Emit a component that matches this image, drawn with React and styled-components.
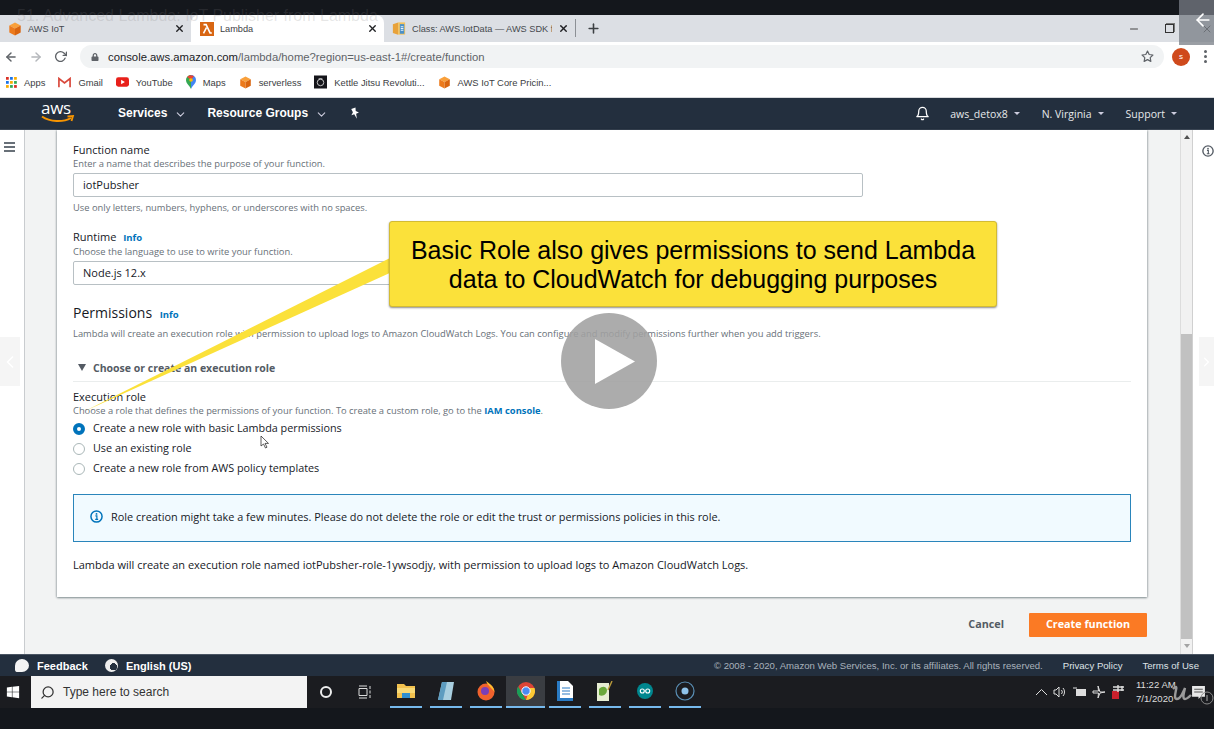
import React from 'react'
import styled, { createGlobalStyle } from 'styled-components'
import { FaWindows, FaLock } from 'react-icons/fa'
import { FiBell, FiChevronDown, FiSearch, FiStar, FiArrowLeft, FiArrowRight, FiRotateCw, FiChevronLeft, FiChevronRight, FiMinus, FiX, FiPlus } from 'react-icons/fi'

const Global = createGlobalStyle`
    html, body { margin: 0; padding: 0; background: #14171c; }
    * { box-sizing: border-box; }
`

const ember = `"Open Sans", "Noto Sans", Arial, sans-serif`
const arial = `"Liberation Sans", Arial, sans-serif`

const Cube = ({ size = 14 }) => (
    <svg width={size} height={size} viewBox="0 0 16 16">
        <path d="M8 0.5 14.5 4 8 7.5 1.5 4z" fill="#f9a03a" />
        <path d="M1.5 4 8 7.5V15.5L1.5 12z" fill="#ec7a1c" />
        <path d="M14.5 4 8 7.5V15.5L14.5 12z" fill="#d9650f" />
    </svg>
)

const LambdaIcon = () => (
    <svg width="14" height="14" viewBox="0 0 16 16">
        <rect width="16" height="16" fill="#d86613" />
        <path d="M4 3h3l4.5 9.5H13.5M7.4 6.5 4 13" fill="none" stroke="#fff" strokeWidth="1.8" />
    </svg>
)

const BookIcon = () => (
    <svg width="14" height="15" viewBox="0 0 16 16">
        <path d="M1 3 7 1v14l-6-2z" fill="#e8a23a" />
        <path d="M7 1h8v14H7z" fill="#f4c25c" />
        <path d="M9 3h5v11H9z" fill="#4a90c8" />
        <path d="M10 6h3M10 8h3M10 10h3" stroke="#fff" />
    </svg>
)

const AppsGrid = () => (
    <svg width="11" height="11" viewBox="0 0 12 12">
        {[0, 1, 2].flatMap(r => [0, 1, 2].map(c => (
            <rect key={`${r}${c}`} x={c * 4.4} y={r * 4.4} width="3" height="3" fill={['#d93025', '#1a73e8', '#f9ab00', '#34a853'][(r + c) % 4]} />
        )))}
    </svg>
)

const GmailIcon = () => (
    <svg width="13" height="11" viewBox="0 0 14 11">
        <path d="M1 10.5V1.2L7 6l6-4.8v9.3" fill="none" stroke="#d9483b" strokeWidth="1.8" />
    </svg>
)

const YoutubeIcon = () => (
    <svg width="13" height="10" viewBox="0 0 14 10">
        <rect width="14" height="10" rx="2.5" fill="#e8201a" />
        <path d="M5.5 2.6 9.6 5 5.5 7.4z" fill="#fff" />
    </svg>
)

const MapsIcon = () => (
    <svg width="10" height="14" viewBox="0 0 10 14">
        <path d="M5 14C3.5 10.5 0 8.500 0 5a5 5 0 0 1 5-5z" fill="#34a853" />
        <path d="M5 14c1.500-3.500 5-5.500 5-9a5 5 0 0 0-5-5z" fill="#4285f4" />
        <path d="M1.200 2 5 5 8 1.200A5 5 0 0 0 1.200 2z" fill="#ea4335" />
        <circle cx="5" cy="5" r="1.800" fill="#fbbc04" />
    </svg>
)

const KettleIcon = () => (
    <svg width="13" height="14" viewBox="0 0 14 14">
        <rect width="14" height="14" fill="#15151a" />
        <circle cx="7" cy="7.500" r="3.500" fill="none" stroke="#cfcfcf" />
        <path d="M5 3.500h4" stroke="#cfcfcf" />
    </svg>
)

const AwsLogo = () => (
    <LogoWrap>
        <LogoText>aws</LogoText>
        <svg width="34" height="9" viewBox="0 0 34 9">
            <path d="M1 1.500C9 7 22 7.500 30 3" fill="none" stroke="#f79400" strokeWidth="2" />
            <path d="M26.500 1.500 32 1 30.500 6" fill="none" stroke="#f79400" strokeWidth="1.800" />
        </svg>
    </LogoWrap>
)

const FolderIcon = () => (
    <svg width="18" height="18" viewBox="0 0 18 18">
        <path d="M0 2h7l2 2h9v12H0z" fill="#f2c14e" />
        <path d="M0 6h18v5H0z" fill="#f8d976" />
        <path d="M5 11h8v5H5z" fill="#2f8fd0" />
    </svg>
)

const NotepadIcon = () => (
    <svg width="18" height="20" viewBox="0 0 18 20">
        <path d="M5 1h12l-3 18H1z" fill="#a9cfe0" />
        <path d="M5 1h5L6 19H1z" fill="#5d9cc0" />
    </svg>
)

const FirefoxIcon = () => (
    <svg width="18" height="20" viewBox="0 0 18 20">
        <circle cx="9" cy="11" r="8.500" fill="#f0622d" />
        <path d="M9 0c4 3 8 5 8.500 11C14 6 11 5 9 0z" fill="#ffbd2e" />
        <circle cx="8" cy="10" r="4" fill="#7a3fb8" />
    </svg>
)

const ChromeIcon = () => (
    <svg width="18" height="18" viewBox="0 0 18 18">
        <circle cx="9" cy="9" r="9" fill="#dc4437" />
        <path d="M1.200 4.500 9 18a9 9 0 0 1-7.800-13.500z" fill="#199f58" />
        <path d="M9 18 13 6h4.500A9 9 0 0 1 9 18z" fill="#fcc934" />
        <circle cx="9" cy="9" r="4.200" fill="#4a8bf2" stroke="#fff" />
    </svg>
)

const DocIcon = () => (
    <svg width="16" height="20" viewBox="0 0 16 20">
        <path d="M0 0h11l5 5v15H0z" fill="#fff" />
        <path d="M0 0h3v20H0zM0 17h16v3H0z" fill="#2a7bc4" />
        <path d="M5 7h8M5 10h8M5 13h8" stroke="#2a7bc4" strokeWidth="1.200" />
    </svg>
)

const NotepadPlus = () => (
    <svg width="16" height="20" viewBox="0 0 16 20">
        <path d="M0 2h12v18H0z" fill="#e6edd2" />
        <path d="M2 8c3-3 7-3 8 1 0 4-4 7-8 5z" fill="#6aa83a" />
        <path d="M11 9 15 0" stroke="#b99a3a" strokeWidth="1.400" />
    </svg>
)

const ArduinoIcon = () => (
    <svg width="16" height="16" viewBox="0 0 16 16">
        <circle cx="8" cy="8" r="8" fill="#00878f" />
        <circle cx="5.300" cy="8" r="2" fill="none" stroke="#fff" strokeWidth="1.100" />
        <circle cx="10.700" cy="8" r="2" fill="none" stroke="#fff" strokeWidth="1.100" />
    </svg>
)

const CircleApp = () => (
    <svg width="20" height="20" viewBox="0 0 20 20">
        <circle cx="10" cy="10" r="9" fill="none" stroke="#5a8fb5" strokeWidth="1.200" />
        <circle cx="10" cy="10" r="3.500" fill="#8fc3ea" />
    </svg>
)

const InfoCircle = ({ color, size = 13 }) => (
    <svg width={size} height={size} viewBox="0 0 14 14">
        <circle cx="7" cy="7" r="6" fill="none" stroke={color} strokeWidth="1.600" />
        <circle cx="7" cy="4.200" r="1" fill={color} />
        <path d="M5.800 6.300H7.400V10M5.600 10.200H8.800" fill="none" stroke={color} strokeWidth="1.300" />
    </svg>
)

const tabs = [
    { id: 'iot', icon: <Cube />, label: 'AWS IoT' },
    { id: 'lambda', icon: <LambdaIcon />, label: 'Lambda', active: true },
    { id: 'sdk', icon: <BookIcon />, label: 'Class: AWS.IotData — AWS SDK f' },
]

const bookmarks = [
    { icon: <AppsGrid />, label: 'Apps' },
    { icon: <GmailIcon />, label: 'Gmail' },
    { icon: <YoutubeIcon />, label: 'YouTube' },
    { icon: <MapsIcon />, label: 'Maps' },
    { icon: <Cube size={13} />, label: 'serverless' },
    { icon: <KettleIcon />, label: 'Kettle Jitsu Revoluti...' },
    { icon: <Cube size={13} />, label: 'AWS IoT Core Pricin...' },
]

const taskApps = [
    { icon: <FolderIcon /> },
    { icon: <NotepadIcon /> },
    { icon: <FirefoxIcon /> },
    { icon: <ChromeIcon />, active: true },
    { icon: <DocIcon /> },
    { icon: <NotepadPlus /> },
    { icon: <ArduinoIcon /> },
    { icon: <CircleApp /> },
]

const roles = [
    { label: 'Create a new role with basic Lambda permissions', checked: true },
    { label: 'Use an existing role' },
    { label: 'Create a new role from AWS policy templates' },
]

const App = () => {
    return (
        <Page>
            <Global />
            <DarkStrip h={15} />

            <TabStrip>
                {tabs.map(tab => (
                    <Tab key={tab.id} $active={tab.active}>
                        {tab.icon}
                        <TabLabel>{tab.label}</TabLabel>
                        <FiX size={11} color="#202124" strokeWidth={3} />
                    </Tab>
                ))}
                <TabDivider />
                <NewTab><FiPlus size={15} strokeWidth={2.5} /></NewTab>
                <WindowButtons>
                    <FiMinus size={12} color="#444" />
                    <RestoreIcon />
                    <FiX size={12} color="#444" />
                </WindowButtons>
            </TabStrip>

            <Toolbar>
                <FiArrowLeft size={14} color="#5f6368" strokeWidth={2.500} />
                <FiArrowRight size={14} color="#b4b7bb" strokeWidth={2.500} />
                <FiRotateCw size={13} color="#5f6368" strokeWidth={2.500} />
                <AddressPill>
                    <FaLock size={8} color="#5f6368" />
                    <Url><b>console.aws.amazon.com</b>/lambda/home?region=us-east-1#/create/function</Url>
                    <FiStar size={13} color="#5f6368" strokeWidth={2.200} />
                </AddressPill>
                <Avatar>s</Avatar>
                <Kebab><i /><i /><i /></Kebab>
            </Toolbar>

            <Bookmarks>
                {bookmarks.map(b => (
                    <Bookmark key={b.label}>{b.icon}<span>{b.label}</span></Bookmark>
                ))}
            </Bookmarks>

            <AwsNav>
                <AwsLogo />
                <NavMain>Services <FiChevronDown size={13} /></NavMain>
                <NavMain>Resource Groups <FiChevronDown size={13} /></NavMain>
                <Pin viewBox="0 0 12 12"><path d="M4 0.500h4.500L7.500 4 10 6.500H7l-1 5-1-5H2L4.500 4z" fill="#fff" transform="rotate(-20 6 6)" /></Pin>
                <NavRight>
                    <BellWrap><FiBell size={15} color="#fff" /></BellWrap>
                    <NavItem>aws_detox8<Caret /></NavItem>
                    <NavItem>N. Virginia<Caret /></NavItem>
                    <NavItem>Support<Caret /></NavItem>
                </NavRight>
            </AwsNav>

            <Body>
                <SideRail>
                    <Burger><i /><i /><i /></Burger>
                </SideRail>
                <Content>
                    <Card>
                        <Label>Function name</Label>
                        <Hint>Enter a name that describes the purpose of your function.</Hint>
                        <TextField>iotPubsher</TextField>
                        <Note>Use only letters, numbers, hyphens, or underscores with no spaces.</Note>

                        <Label $top={15}>Runtime <InfoLink>Info</InfoLink></Label>
                        <Hint>Choose the language to use to write your function.</Hint>
                        <TextField>Node.js 12.x</TextField>

                        <Heading>Permissions <InfoLink>Info</InfoLink></Heading>
                        <Hint>Lambda will create an execution role with permission to upload logs to Amazon CloudWatch Logs. You can configure and modify permissions further when you add triggers.</Hint>

                        <Section><Triangle />Choose or create an execution role</Section>

                        <Label $top={7}>Execution role</Label>
                        <Hint>Choose a role that defines the permissions of your function. To create a custom role, go to the <InfoLink>IAM console</InfoLink>.</Hint>
                        <Roles>
                            {roles.map(r => (
                                <Role key={r.label}><Radio $checked={r.checked} />{r.label}</Role>
                            ))}
                        </Roles>

                        <Alert>
                            <InfoCircle color="#0073bb" />
                            Role creation might take a few minutes. Please do not delete the role or edit the trust or permissions policies in this role.
                        </Alert>
                        <Summary>Lambda will create an execution role named iotPubsher-role-1ywsodjy, with permission to upload logs to Amazon CloudWatch Logs.</Summary>
                    </Card>
                    <Actions>
                        <CancelBtn>Cancel</CancelBtn>
                        <CreateBtn>Create function</CreateBtn>
                    </Actions>
                </Content>
                <Scrollbar>
                    <ArrowUp />
                    <ScrollTrack><ScrollThumb /></ScrollTrack>
                    <ArrowDown />
                </Scrollbar>
                <RightRail><InfoCircle color="#545b64" size={12} /></RightRail>
            </Body>

            <Footer>
                <FootLeft><Bubble />Feedback</FootLeft>
                <FootLeft $lang><Globe />English (US)</FootLeft>
                <FootRight>
                    <Copy>© 2008 - 2020, Amazon Web Services, Inc. or its affiliates. All rights reserved.</Copy>
                    <FootLink>Privacy Policy</FootLink>
                    <FootLink>Terms of Use</FootLink>
                </FootRight>
            </Footer>

            <Taskbar>
                <StartBtn><FaWindows size={14} color="#fff" /></StartBtn>
                <SearchBox>
                    <FiSearch size={15} color="#333" style={{ transform: 'scaleX(-1)' }} />
                    Type here to search
                </SearchBox>
                <Cortana />
                <TaskView viewBox="0 0 14 14">
                    <path d="M1 3.500h8v7H1zM1 1h8M1 13h8M12 1v3M12 5.500v3M12 10v3" fill="none" stroke="#ddd" />
                </TaskView>
                <TaskApps>
                    {taskApps.map((a, i) => (
                        <TaskApp key={i} $active={a.active}>{a.icon}</TaskApp>
                    ))}
                </TaskApps>
                <Tray>
                    <svg width="13" height="8" viewBox="0 0 13 8"><path d="M1 7 6.500 1.500 12 7" fill="none" stroke="#ddd" /></svg>
                    <svg width="14" height="14" viewBox="0 0 14 14"><path d="M1 5h2l3-3v10L3 9H1zM8.500 5a3 3 0 0 1 0 4M10 3a6 6 0 0 1 0 8" fill="none" stroke="#ddd" /></svg>
                    <svg width="14" height="10" viewBox="0 0 14 10"><path d="M3 2h10v7H3z" fill="#ddd" /><path d="M0 1h4" stroke="#ddd" /></svg>
                    <svg width="14" height="14" viewBox="0 0 14 14"><path d="M6 1 8 7h5L8 8l-2 5 .5-5H1V6h5.500z" fill="none" stroke="#ddd" /></svg>
                    <svg width="13" height="14" viewBox="0 0 13 14"><rect x="0" y="6" width="7" height="8" fill="#c8202c" /><path d="M1 2h11M1 5h11M6 0v7M10 1v5" stroke="#ddd" strokeWidth="1.400" /></svg>
                    <Clock><span>11:22 AM</span><span>7/1/2020</span></Clock>
                    <Notif viewBox="0 0 14 14"><path d="M1 1h12v10H9l-2 2V11H1z" fill="#e8e8e8" /><path d="M3 4h8M3 6.500h8" stroke="#555" /></Notif>
                </Tray>
            </Taskbar>

            <DarkStrip h={21} />

            {/* video player stuff on top of the page */}
            <VideoTitle>51. Advanced Lambda: IoT Publisher from Lambda</VideoTitle>
            <BackBox><FiArrowLeft size={20} color="#fff" strokeWidth={2} /></BackBox>
            <Pointer viewBox="0 0 1214 729">
                <polygon points="392,257 392,272 85,411" fill="#fbe13a" />
            </Pointer>
            <Callout>Basic Role also gives permissions to send Lambda<br />data to CloudWatch for debugging purposes</Callout>
            <PlayButton>
                <svg width="40" height="45" viewBox="0 0 40 45"><path d="M0 0 40 22.500 0 45z" fill="#fff" /></svg>
            </PlayButton>
            <SlideNav $side="left"><FiChevronLeft size={24} color="#fff" /></SlideNav>
            <SlideNav $side="right"><FiChevronRight size={24} color="#fff" /></SlideNav>
            <Cursor viewBox="0 0 10 14"><path d="M1 1v10l2.500-2 2 4 1.500-.8-2-3.800H8.500z" fill="#fff" stroke="#333" strokeWidth=".8" /></Cursor>
            <Watermark viewBox="0 0 44 26">
                <path d="M3 9c3-3 4-3 3 1-1 5-2 9 1 9 4 0 6-7 8-11-1 4-3 11 0 11 2 0 4-2 6-4" fill="none" stroke="#9a9a9a" strokeWidth="2.400" />
                <circle cx="37" cy="18" r="6" fill="none" stroke="#8a8a8a" strokeWidth="1" />
                <path d="M37 15v6" stroke="#aaa" strokeWidth="1" />
            </Watermark>
        </Page>
    )
}

export default App


const Page = styled.div`
    position: relative;
    width: 1214px;
    height: 729px;
    overflow: hidden;
    display: flex;
    flex-direction: column;
    font-family: ${ember};
    background: #14171c;
`

const DarkStrip = styled.div`
    height: ${props => props.h}px;
    flex: none;
    background: #14171c;
`

const TabStrip = styled.div`
    height: 27px;
    flex: none;
    display: flex;
    align-items: flex-end;
    background: #dcdfe4;
    font-family: ${arial};
`

const Tab = styled.div`
    width: ${props => props.$active ? '193px' : '191px'};
    height: 27px;
    padding: 0 6px 0 ${props => props.$active ? '9px' : '8px'};
    display: flex;
    align-items: center;
    gap: 6px;
    border-radius: 8px 8px 0 0;
    background: ${props => props.$active ? '#ffffff' : 'transparent'};
    color: ${props => props.$active ? '#3c4043' : '#45494e'};
`

const TabLabel = styled.span`
    flex: 1;
    font-size: 9.200px;
    white-space: nowrap;
    overflow: hidden;
`

const TabDivider = styled.div`
    width: 1px;
    height: 18px;
    margin: 0 0 5px 0;
    background: #8c9095;
`

const NewTab = styled.div`
    width: 34px;
    height: 27px;
    display: flex;
    align-items: center;
    justify-content: center;
    color: #3c4043;
`

const WindowButtons = styled.div`
    margin-left: auto;
    width: 86px;
    height: 27px;
    padding: 0 1px 0 0;
    display: flex;
    align-items: center;
    justify-content: space-between;
`

const RestoreIcon = styled.div`
    width: 9px;
    height: 9px;
    margin-right: 3px;
    border: 1.5px solid #333;
    box-shadow: 1px -1px 0 #777;
`

const Toolbar = styled.div`
    height: 26px;
    flex: none;
    padding: 3px 0 0 4px;
    display: flex;
    align-items: center;
    gap: 11px;
    background: #fff;
`

const AddressPill = styled.div`
    flex: 1;
    height: 23px;
    margin-left: 2px;
    padding: 0 10px 0 11px;
    display: flex;
    align-items: center;
    gap: 9px;
    border-radius: 12px;
    background: #f1f3f4;
`

const Url = styled.span`
    flex: 1;
    font-family: ${arial};
    font-size: 11.300px;
    color: #5f6368;
    white-space: nowrap;

    b {
        font-weight: 400;
        color: #202124;
    }
`

const Avatar = styled.div`
    width: 18px;
    height: 18px;
    margin-left: -3px;
    border-radius: 50%;
    display: flex;
    align-items: center;
    justify-content: center;
    background: #cf4a1c;
    color: #fff;
    font: 8px ${arial};
`

const Kebab = styled.div`
    width: 3px;
    margin: 0 7px 0 3px;
    display: flex;
    flex-direction: column;
    gap: 2px;

    i {
        display: block;
        height: 3px;
        border-radius: 50%;
        background: #5f6368;
    }
`

const Bookmarks = styled.div`
    height: 30px;
    flex: none;
    padding: 0 0 1px 6px;
    display: flex;
    align-items: center;
    gap: 13px;
    background: #fff;
    border-bottom: 1px solid #d8dadd;
    font-family: ${arial};
`

const Bookmark = styled.div`
    display: flex;
    align-items: center;
    gap: 7px;
    font-size: 9.400px;
    color: #3c4043;
`

const AwsNav = styled.div`
    height: 32px;
    flex: none;
    padding-left: 41px;
    display: flex;
    align-items: center;
    background: #232f3e;
    color: #fff;
    border-bottom: 1px solid #3a4553;
`

const LogoWrap = styled.div`
    width: 77px;
    display: flex;
    flex-direction: column;
    height: 26px;
    margin-top: -2px;
`

const LogoText = styled.div`
    font: 17px/15px ${ember};
    color: #fff;
    letter-spacing: -.3px;
`

const NavMain = styled.div`
    margin-right: 20px;
    padding-bottom: 1px;
    display: flex;
    align-items: center;
    gap: 7px;
    font: 700 12px ${arial};
    white-space: nowrap;

    svg { margin-top: 2px; color: #ccd; }
`

const Pin = styled.svg`
    width: 12px;
    height: 13px;
    margin-left: 1px;
`

const NavRight = styled.div`
    margin-left: auto;
    padding: 0 37px 0 0;
    display: flex;
    align-items: center;
    gap: 22px;
`

const BellWrap = styled.div`
    display: flex;
    margin-right: -2px;
`

const NavItem = styled.div`
    display: flex;
    align-items: center;
    gap: 6px;
    font: 10.500px ${ember};
    color: #e6e8ea;
`

const Caret = styled.i`
    width: 0;
    height: 0;
    border-left: 3.500px solid transparent;
    border-right: 3.500px solid transparent;
    border-top: 3.500px solid #ccd;
`

const Body = styled.div`
    flex: 1;
    min-height: 0;
    display: flex;
    background: #f2f3f3;
`

const SideRail = styled.div`
    width: 25px;
    flex: none;
    padding: 12px 0 0 4px;
    background: #fff;
    border-right: 1px solid #c9cccf;
`

const Burger = styled.div`
    width: 11px;
    display: flex;
    flex-direction: column;
    gap: 2px;

    i {
        display: block;
        height: 2px;
        background: #687078;
    }
`

const Content = styled.div`
    flex: 1;
    padding: 0 33px 0 32px;
    display: flex;
    flex-direction: column;
`

const Card = styled.div`
    height: 467px;
    padding: 12px 16px 0;
    background: #fff;
    box-shadow: 0 1px 2px rgba(0, 28, 36, .4), 1px 0 2px rgba(0, 28, 36, .15), -1px 0 2px rgba(0, 28, 36, .15);
`

const Label = styled.div`
    margin-top: ${props => props.$top || 0}px;
    font-size: 11px;
    line-height: 15px;
    color: #16191f;
`

const Hint = styled.div`
    margin-top: 1px;
    font-size: 9.350px;
    line-height: 12px;
    color: #687078;
    white-space: nowrap;
`

const InfoLink = styled.span`
    font-size: 9.500px;
    font-weight: 700;
    color: #0073bb;
    margin-left: 4px;

    ${Hint} & {
        margin-left: 0;
        font-size: 9.350px;
    }
`

const TextField = styled.div`
    width: 790px;
    height: 24px;
    margin-top: 3px;
    padding: 0 9px 2px;
    display: flex;
    align-items: center;
    border: 1px solid #b8c0c4;
    border-radius: 2px;
    font-size: 11px;
    color: #16191f;
`

const Note = styled(Hint)`
    margin-top: 5px;
`

const Heading = styled.div`
    margin: 18px 0 4px;
    font-size: 14px;
    line-height: 19px;
    color: #16191f;
`

const Section = styled.div`
    height: 29px;
    margin-top: 13px;
    padding: 1px 0 0 5px;
    display: flex;
    align-items: center;
    gap: 7px;
    border-bottom: 1px solid #eaeded;
    font-size: 10.500px;
    font-weight: 700;
    color: #545b64;
`

const Triangle = styled.i`
    width: 0;
    height: 0;
    border-left: 4.500px solid transparent;
    border-right: 4.500px solid transparent;
    border-top: 7px solid #545b64;
`

const Roles = styled.div`
    margin-top: 2px;
    display: flex;
    flex-direction: column;
    gap: 4px;
`

const Role = styled.div`
    height: 16px;
    display: flex;
    align-items: center;
    gap: 8px;
    font-size: 10.800px;
    color: #16191f;
`

const Radio = styled.i`
    width: 12px;
    height: 12px;
    margin-top: 4px;
    border-radius: 50%;
    background: #fff;
    border: ${props => props.$checked ? '4px solid #0073bb' : '1px solid #aab7b8'};
`

const Alert = styled.div`
    height: 48px;
    margin-top: 19px;
    padding: 0 0 4px 16px;
    display: flex;
    align-items: center;
    gap: 8px;
    background: #f1faff;
    border: 1px solid #2a85bb;
    font-size: 10.900px;
    color: #16191f;
`

const Summary = styled.div`
    margin-top: 15px;
    font-size: 11px;
    line-height: 16px;
    color: #16191f;
`

const Actions = styled.div`
    margin-top: 16px;
    display: flex;
    align-items: center;
    justify-content: flex-end;
    gap: 25px;
`

const CancelBtn = styled.div`
    margin-bottom: 3px;
    font-size: 10.800px;
    font-weight: 700;
    color: #545b64;
`

const CreateBtn = styled.div`
    width: 118px;
    height: 24px;
    padding-bottom: 3px;
    display: flex;
    align-items: center;
    justify-content: center;
    border-radius: 1px;
    font-size: 10.800px;
    font-weight: 700;
    color: #fff;
    background: #fb7a24;
`

const Scrollbar = styled.div`
    width: 13px;
    flex: none;
    display: flex;
    flex-direction: column;
    align-items: center;
    background: #f1f1f1;
    border-left: 1px solid #dcdcdc;
    border-right: 1px solid #d0d0d0;
`

const ArrowUp = styled.i`
    margin: 5px 0;
    width: 0;
    height: 0;
    border-left: 3.500px solid transparent;
    border-right: 3.500px solid transparent;
    border-bottom: 4px solid #505050;
`

const ArrowDown = styled(ArrowUp)`
    border-bottom: 0;
    border-top: 4px solid #a3a3a3;
    margin-bottom: 6px;
`

const ScrollTrack = styled.div`
    flex: 1;
    width: 100%;
    display: flex;
    align-items: flex-end;
`

const ScrollThumb = styled.div`
    width: 100%;
    height: 305px;
    background: #c1c1c1;
`

const RightRail = styled.div`
    width: 21px;
    flex: none;
    padding: 10px 0 0 9px;
    background: #fff;
`

const Footer = styled.div`
    height: 22px;
    flex: none;
    padding-left: 15px;
    display: flex;
    align-items: center;
    background: #232f3e;
    border-top: 1px solid #4a5563;
`

const FootLeft = styled.div`
    width: ${props => props.$lang ? 'auto' : '90px'};
    display: flex;
    align-items: center;
    gap: 8px;
    font: 700 11px ${arial};
    color: #fff;
`

const Bubble = styled.i`
    width: 14px;
    height: 13px;
    border-radius: 50% 50% 50% 20%;
    background: #f4f4f4;
`

const Globe = styled.i`
    width: 13px;
    height: 13px;
    border-radius: 50%;
    background: radial-gradient(circle at 65% 60%, #232f3e 30%, #eee 32%);
`

const FootRight = styled.div`
    margin-left: auto;
    padding-right: 15px;
    display: flex;
    align-items: center;
    gap: 20px;
    font: 9.600px ${arial};
`

const Copy = styled.span`
    color: #a9b2bc;
`

const FootLink = styled.span`
    color: #dfe3e6;
`

const Taskbar = styled.div`
    height: 32px;
    flex: none;
    display: flex;
    align-items: center;
    background: #1b1c20;
`

const StartBtn = styled.div`
    width: 31px;
    height: 100%;
    padding-left: 6px;
    display: flex;
    align-items: center;
`

const SearchBox = styled.div`
    width: 276px;
    height: 100%;
    padding-left: 9px;
    display: flex;
    align-items: center;
    gap: 8px;
    background: #f3f3f3;
    font: 12px ${arial};
    color: #333;
`

const Cortana = styled.i`
    width: 12px;
    height: 12px;
    margin: 0 0 0 13px;
    border-radius: 50%;
    border: 2px solid #eee;
`

const TaskView = styled.svg`
    width: 14px;
    height: 14px;
    margin-left: 26px;
`

const TaskApps = styled.div`
    height: 100%;
    margin-left: 18px;
    display: flex;
    gap: 8px;
`

const TaskApp = styled.div`
    width: ${props => props.$active ? '39px' : '32px'};
    height: 100%;
    margin: ${props => props.$active ? '0 -4px' : '0'};
    display: flex;
    align-items: center;
    justify-content: center;
    background: ${props => props.$active ? '#3a3d42' : 'transparent'};
    border-bottom: 2px solid #76b9ed;
`

const Tray = styled.div`
    margin-left: auto;
    padding-right: 8.500px;
    display: flex;
    align-items: center;
    gap: 5.500px;
`

const Clock = styled.div`
    width: 44px;
    margin: 0 5px 0 6px;
    display: flex;
    flex-direction: column;
    font: 9.600px/14px ${arial};
    color: #ddd;
`

const Notif = styled.svg`
    width: 15px;
    height: 15px;
`

const VideoTitle = styled.div`
    position: absolute;
    left: 17px;
    top: 7px;
    font: 16px ${arial};
    color: rgba(124, 124, 124, .2);
    white-space: nowrap;
`

const BackBox = styled.div`
    position: absolute;
    right: 0;
    top: 0;
    width: 35px;
    height: 45px;
    padding: 10px 0 0 14px;
    background: rgba(120, 126, 134, .75);
`

const Pointer = styled.svg`
    position: absolute;
    left: 0;
    top: 0;
    width: 1214px;
    height: 729px;
    pointer-events: none;
`

const Callout = styled.div`
    position: absolute;
    left: 389px;
    top: 221px;
    width: 608px;
    height: 86px;
    padding-top: 14px;
    border-radius: 3px;
    background: #fbe13a;
    border: 1px solid #d2bb34;
    box-shadow: 0 1px 2px rgba(0, 0, 0, .45);
    font: 25px/29px ${arial};
    color: #000;
    text-align: center;
`

const PlayButton = styled.div`
    position: absolute;
    left: 561px;
    top: 313px;
    width: 96px;
    height: 96px;
    padding-left: 34px;
    display: flex;
    align-items: center;
    border-radius: 50%;
    background: rgba(160, 160, 160, .88);
`

const SlideNav = styled.div`
    position: absolute;
    top: 337px;
    ${props => props.$side}: 0;
    width: ${props => props.$side === 'left' ? '20px' : '15px'};
    height: 49px;
    display: flex;
    align-items: center;
    justify-content: center;
    background: rgba(225, 225, 225, .35);
`

const Cursor = styled.svg`
    position: absolute;
    left: 260px;
    top: 435px;
    width: 10px;
    height: 14px;
`

const Watermark = styled.svg`
    position: absolute;
    left: 1170px;
    top: 680px;
    width: 44px;
    height: 26px;
`
